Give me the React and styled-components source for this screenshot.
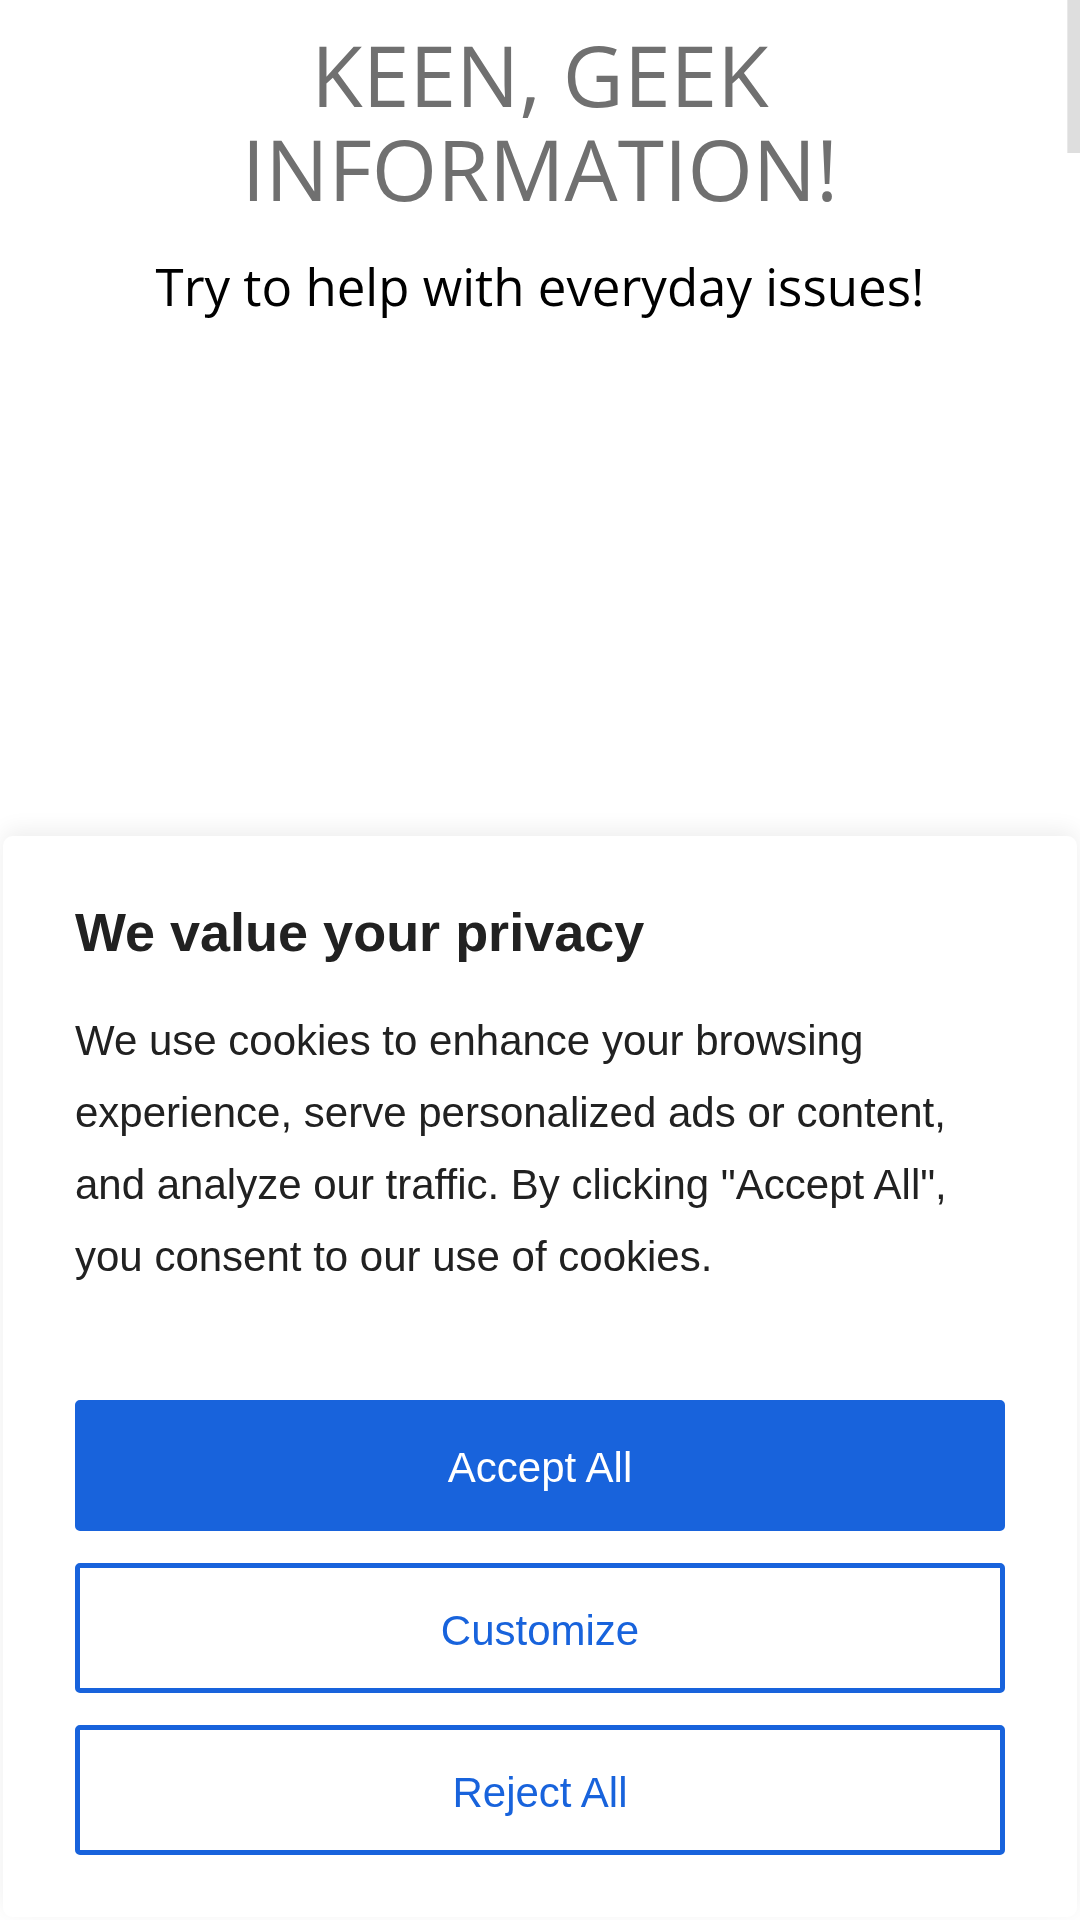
import React from 'react';
import styled, { createGlobalStyle } from 'styled-components';

const GlobalStyle = createGlobalStyle`
    html, body {
        margin: 0;
        padding: 0;
        background: #ffffff;
    }
    body {
        font-family: "Open Sans", "Liberation Sans", sans-serif;
    }
`

const Page = styled.main`
    min-height: 1920px;
    padding-top: 28px;
    box-sizing: border-box;
    text-align: center;
`

const SiteTitle = styled.h1`
    margin: 0 auto;
    max-width: 760px;
    font-family: "Open Sans", sans-serif;
    font-weight: 400;
    font-size: 84px;
    line-height: 94px;
    color: #707070;
`

const Tagline = styled.p`
    margin: 34px 0 0;
    font-family: "Open Sans", sans-serif;
    font-size: 51px;
    line-height: 72px;
    color: #000;
`

const ScrollThumb = styled.div`
    position: fixed;
    top: 0;
    right: 0;
    width: 12px;
    height: 153px;
    background: #dedede;
    border-left: 1px solid #e9e9e9;
`

const Banner = styled.section`
    position: fixed;
    left: 3px;
    right: 3px;
    bottom: 3px;
    padding: 65px 72px 62px;
    background: #ffffff;
    border-radius: 10px;
    box-shadow: 0 -6px 22px rgba(0, 0, 0, 0.07);
    font-family: "Liberation Sans", Arial, sans-serif;
    color: #212121;
`

const BannerTitle = styled.h2`
    margin: 0 0 42px;
    font-size: 54px;
    font-weight: 700;
    line-height: 62px;
`

const BannerText = styled.p`
    margin: 0 0 107px;
    font-size: 42px;
    line-height: 72px;
`

const Actions = styled.div`
    display: flex;
    flex-direction: column;
    gap: 32px;
`

const Button = styled.button`
    height: ${p => p.$primary ? '131px' : '130px'};
    width: 100%;
    box-sizing: border-box;
    padding: 5px 0 0;
    border: 5px solid #1863dc;
    border-radius: 5px;
    background: ${p => p.$primary ? '#1863dc' : '#ffffff'};
    color: ${p => p.$primary ? '#ffffff' : '#1863dc'};
    font-family: "Liberation Sans", Arial, sans-serif;
    font-size: 42px;
    cursor: pointer;
`

function App() {
    return (
        <>
            <GlobalStyle />
            <Page>
                <SiteTitle>KEEN, GEEK INFORMATION!</SiteTitle>
                <Tagline>Try to help with everyday issues!</Tagline>
            </Page>
            <ScrollThumb />
            <Banner>
                <BannerTitle>We value your privacy</BannerTitle>
                <BannerText>
                    We use cookies to enhance your browsing experience, serve personalized ads or content, and analyze our traffic. By clicking "Accept All", you consent to our use of cookies.
                </BannerText>
                <Actions>
                    <Button $primary>Accept All</Button>
                    <Button>Customize</Button>
                    <Button>Reject All</Button>
                </Actions>
            </Banner>
        </>
    )
}

export default App
